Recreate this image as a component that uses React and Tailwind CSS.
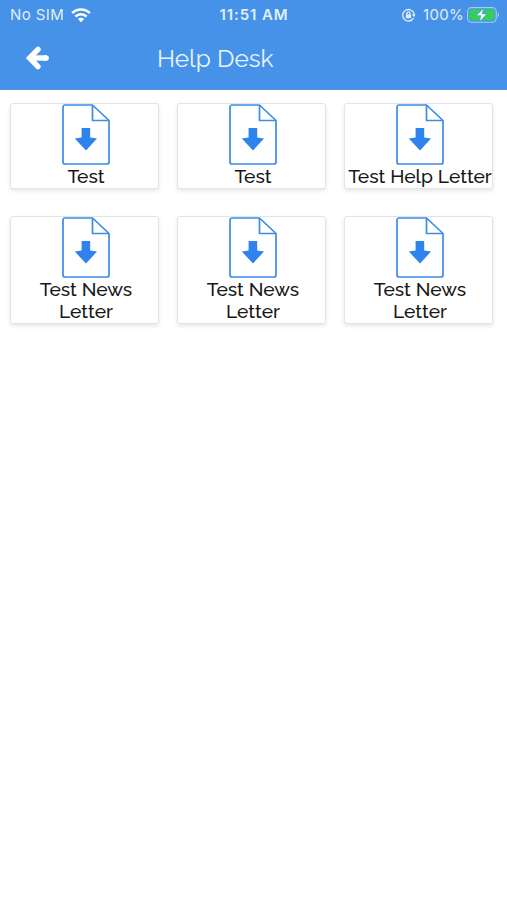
import React from 'react';

const letters = [
  { id: 1, title: 'Test' },
  { id: 2, title: 'Test' },
  { id: 3, title: 'Test Help Letter' },
  { id: 4, title: 'Test News Letter' },
  { id: 5, title: 'Test News Letter' },
  { id: 6, title: 'Test News Letter' },
];

const WifiIcon = () => (
  <svg className="w-5 h-4" viewBox="0 0 20 16" fill="none" stroke="currentColor" strokeWidth="2.6">
    <path d="M1.2 6.1a12.6 12.6 0 0 1 17.6 0" />
    <path d="M4.4 9.5a8 8 0 0 1 11.2 0" />
    <path d="M10 15.2 6.9 12a4.4 4.4 0 0 1 6.2 0Z" fill="currentColor" stroke="none" />
  </svg>
);

const RotationLockIcon = () => (
  <svg className="w-[15px] h-[15px]" viewBox="0 0 15 15" fill="none" stroke="currentColor" strokeWidth="1.3">
    <path d="M12.4 4.2a5.8 5.8 0 1 0 .1 6" />
    <path d="m10.9 6.6 3.6-.2-1.5 2.8Z" fill="currentColor" stroke="none" />
    <path d="M12.4 4.2q.7 1.2.7 3" />
    <path d="M5.9 7V5.4a1.6 1.6 0 0 1 3.2 0V7" />
    <rect x="4.9" y="6.4" width="5.2" height="3.9" rx="0.6" fill="currentColor" stroke="none" />
  </svg>
);

const BatteryIcon = () => (
  <svg className="w-[33px] h-[17px]" viewBox="0 0 33 17">
    <rect x="0.6" y="0.6" width="28.6" height="14.6" rx="4" fill="none" stroke="#a6cdf5" strokeWidth="1.1" />
    <rect x="2.2" y="2.2" width="25.4" height="11.4" rx="2.6" fill="#35cd5c" />
    <path d="M30.6 5.4c1.9.7 1.9 4.3 0 5Z" fill="#a6cdf5" />
    <path d="M16.6 .9 9.3 8.7h4.6l-1.6 6.2 7.6-8h-4.7Z" fill="#fff" stroke="#4592e8" strokeWidth="0.7" />
  </svg>
);

const BackIcon = () => (
  <svg className="w-6 h-6" viewBox="0 0 24 24" fill="none" stroke="currentColor" strokeWidth="5.4" strokeLinecap="round">
    <path d="M13 3.4 4.6 12l8.4 8.6" />
    <path d="M6 12h15.2" strokeLinecap="butt" />
    <path d="M20 12h1.2" />
  </svg>
);

const FileIcon = () => (
  <svg className="w-12 h-[61px] ml-0.5 shrink-0" viewBox="0 0 48 61" fill="none" stroke="#3d8ce6" strokeWidth="1.7" strokeLinejoin="round">
    <path d="M3 1h27.5L47 16.5V58a2 2 0 0 1-2 2H3a2 2 0 0 1-2-2V3a2 2 0 0 1 2-2Z" />
    <path d="M30.5 1v15.5H47" />
    <path d="M19.6 24h8.6v9.6l6.8 1L24 46.4 12.8 34.6l6.8-1Z" fill="#2e83ee" stroke="none" />
  </svg>
);

const LetterCard = ({ title }) => (
  <div className="flex flex-col items-center bg-white border border-[#e4e4e4] rounded-[3px] shadow-[0_2px_4px_rgba(0,0,0,0.1)]">
    <FileIcon />
    <p className="w-full pb-px pl-[3px] text-center text-[19.2px] leading-[22px] font-medium text-[#171717]">
      {title}
    </p>
  </div>
);

const App = () => {
  return (
    <div className="min-h-screen bg-white font-['Raleway','Lato',sans-serif]">
      <header className="h-[90px] bg-[#4592e8] border-b border-[#5c93d4] text-white">
        {/* Status bar */}
        <div className="grid grid-cols-3 items-center h-[30px] pl-2.5 pr-[7px] font-['Inter',sans-serif] text-[15px] text-[#e1effd]">
          <div className="flex items-center gap-[7px]">
            <span className="tracking-[0.4px]">No SIM</span>
            <span className="text-white"><WifiIcon /></span>
          </div>
          <span className="pr-0.5 text-center font-semibold tracking-[0.9px] whitespace-nowrap">11:51 AM</span>
          <div className="flex items-center justify-end">
            <RotationLockIcon />
            <span className="ml-[7px] mr-[3px] tracking-[0.3px]">100%</span>
            <BatteryIcon />
          </div>
        </div>

        {/* Title bar */}
        <div className="flex items-center h-14 pl-[25px]">
          <button type="button" aria-label="Back">
            <BackIcon />
          </button>
          <h1 className="ml-[108px] pt-0.5 text-[24.4px] leading-8 text-[#eaf5ff]">Help Desk</h1>
        </div>
      </header>

      {/* Letters */}
      <main className="grid grid-cols-3 items-start gap-x-[18px] gap-y-[27px] pt-[13px] pl-2.5 pr-3.5">
        {letters.map((letter) => (
          <LetterCard key={letter.id} title={letter.title} />
        ))}
      </main>
    </div>
  );
};

export default App;
